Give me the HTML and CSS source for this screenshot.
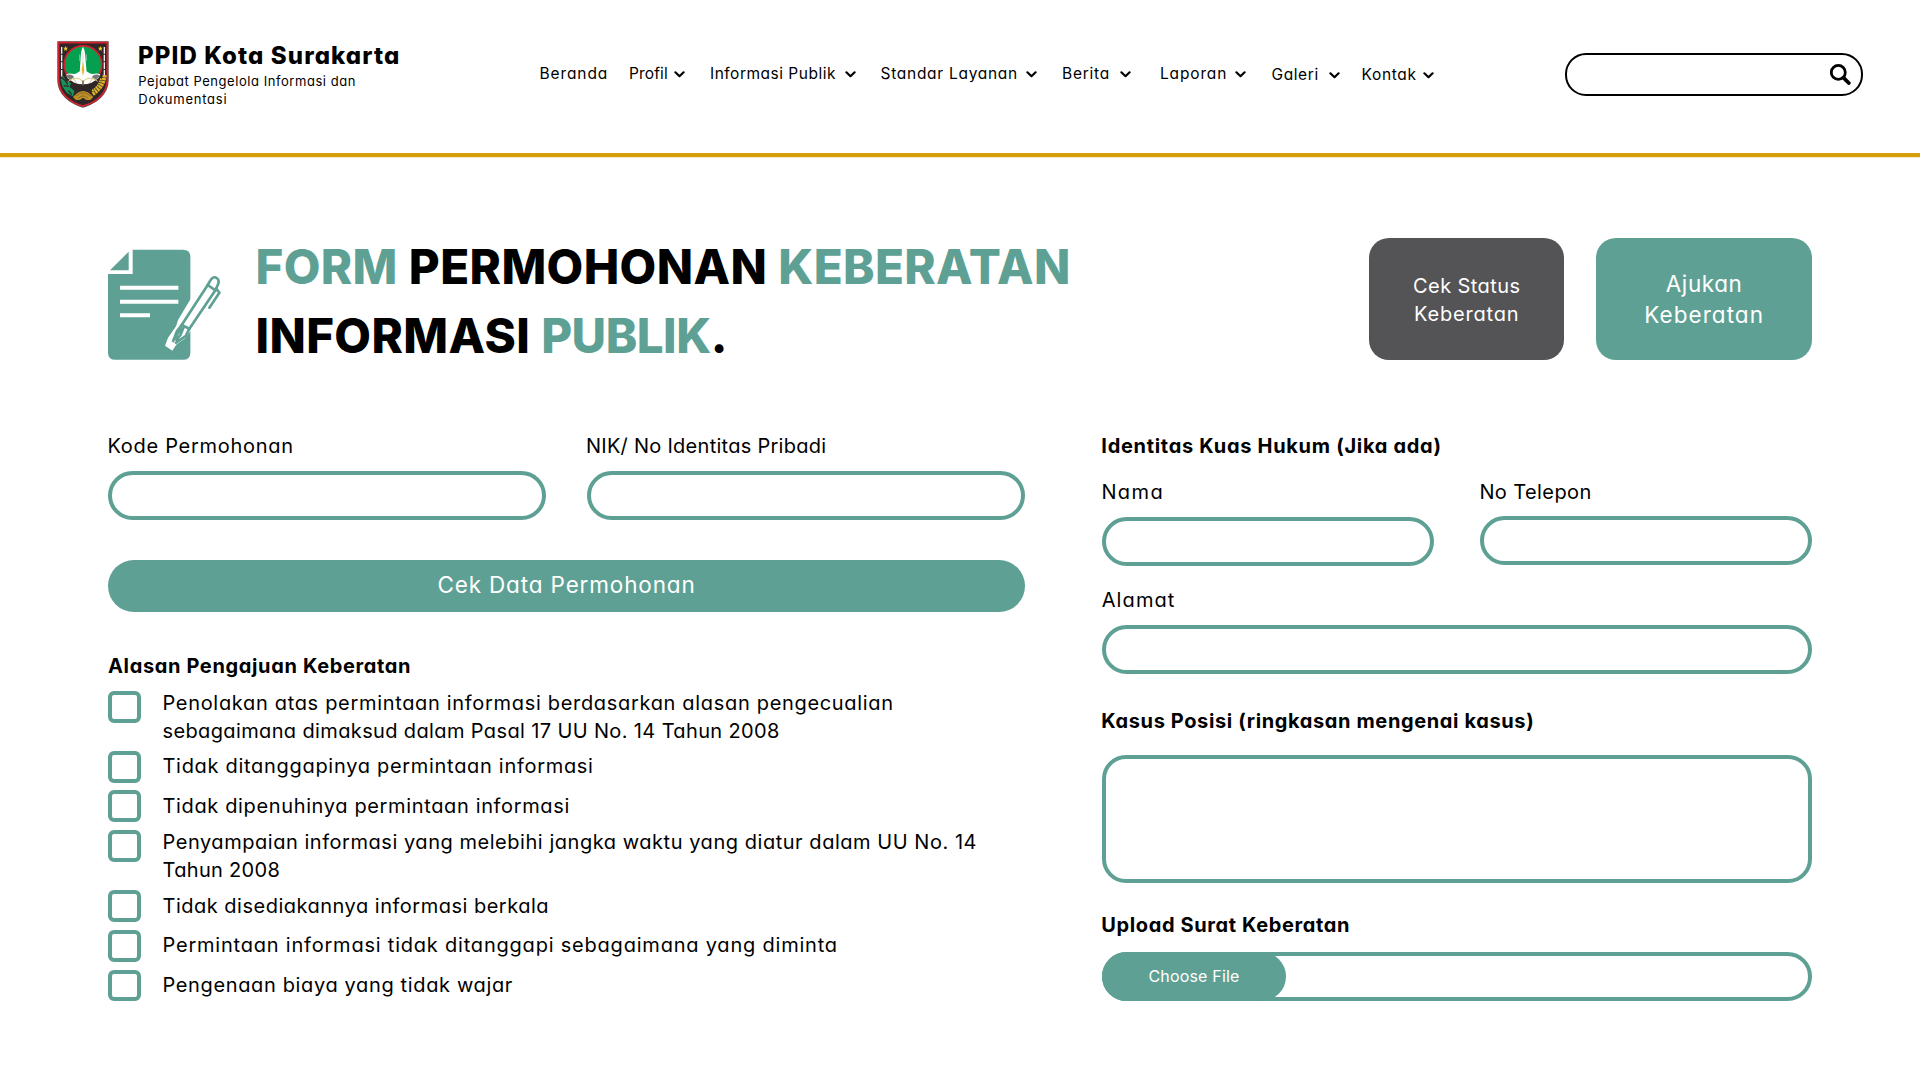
FILE: index.html
```html
<!DOCTYPE html>
<html lang="id">
<head>
<meta charset="utf-8">
<title>PPID Kota Surakarta</title>
<link rel="stylesheet" href="styles.css">
</head>
<body>
<svg width="0" height="0" class="defs"><defs><symbol id="chev" viewBox="0 0 11 7"><path d="M1.4 1.3 5.5 5.2 9.6 1.3" fill="none" stroke="#000" stroke-width="2.2" stroke-linecap="round" stroke-linejoin="round"/></symbol></defs></svg>
<header class="header">
  <div class="brand">
    <svg class="crest" viewBox="0 0 156 201">
      <path d="M1 1H155V118C155 160 118 190 78 200C38 190 1 160 1 118Z" fill="#5b4a4c"/>
      <path d="M5 5H151V117C151 158 114 186 78 195C42 186 5 158 5 117Z" fill="#2f2727" stroke="#d6212c" stroke-width="5"/>
      <path d="M14 18V112M142 18V112" stroke="#eee" stroke-width="4" stroke-dasharray="20 3"/>
      <path d="M11 116 18 104 28 120 42 126 38 138 52 150 48 166 30 156 17 138Z" fill="#16945a"/>
      <path d="M12 108l12 10M20 134l16 2M34 148l10 12M24 118l8 12" stroke="#2f2727" stroke-width="4"/>
      <path d="M143 102C141 124 132 142 106 160" fill="none" stroke="#dcb22a" stroke-width="12" stroke-dasharray="7 2"/>
      <path d="M132 112C128 128 120 140 104 150" fill="none" stroke="#e7c33b" stroke-width="5" stroke-dasharray="5 2"/>
      <circle cx="78" cy="71" r="59" fill="#d6212c"/>
      <circle cx="78" cy="71" r="54" fill="#05a04f"/>
      <path d="M28 100C42 94 50 103 60 96L70 90H87L97 96C108 103 116 94 130 100L124 112 104 125Q78 134 52 125L32 112Z" fill="#fff"/>
      <path d="M26 105q14-10 26 3l-12 8ZM130 105q-14-10-26 3l12 8Z" fill="#777"/>
      <path d="M68 96 72 35 75 24 78 17 81 24 84 35 89 96Z" fill="#fff"/>
      <path d="M78 32V96M68 40v20M88 40v20" stroke="#b9cfbd" stroke-width="2"/>
      <path d="M78 62l4 25-4 18-4-18Z" fill="#e2b52b"/>
      <path d="M34 121Q57 102 78 121Q99 102 122 121M78 119V134M50 113l8 13M106 113l-8 13" fill="none" stroke="#d8c878" stroke-width="3"/>
      <path d="M78 119V136" stroke="#222" stroke-width="3"/>
      <path d="M48 168Q78 132 109 168L100 177H88L78 170 68 177H57Z" fill="#bf9029"/>
      <path d="M56 165Q78 146 101 165M64 172Q78 157 93 172" fill="none" stroke="#725621" stroke-width="2"/>
      <path d="M26 15l2 5h5l-4 4 2 6-5-4-5 4 2-6-4-4h5ZM130 15l2 5h5l-4 4 2 6-5-4-5 4 2-6-4-4h5Z" fill="#f2d324"/>
    </svg>
    <div class="brand-text">
      <div class="brand-name">PPID Kota Surakarta</div>
      <div class="brand-sub">Pejabat Pengelola Informasi dan<br><span class="brand-sub-last">Dokumentasi</span></div>
    </div>
  </div>
  <nav class="nav">
    <a class="n-beranda">Beranda</a>
    <a class="n-profil">Profil<svg class="chev"><use href="#chev"/></svg></a>
    <a class="n-info">Informasi Publik<svg class="chev"><use href="#chev"/></svg></a>
    <a class="n-standar">Standar Layanan<svg class="chev"><use href="#chev"/></svg></a>
    <a class="n-berita">Berita<svg class="chev"><use href="#chev"/></svg></a>
    <a class="n-laporan">Laporan<svg class="chev"><use href="#chev"/></svg></a>
    <a class="n-galeri">Galeri<svg class="chev"><use href="#chev"/></svg></a>
    <a class="n-kontak">Kontak<svg class="chev"><use href="#chev"/></svg></a>
  </nav>
  <div class="search">
    <svg class="search-icon" viewBox="0 0 21 21"><circle cx="8.3" cy="8.4" r="7" fill="none" stroke="#000" stroke-width="2.8"/><path d="M13.6 13.9 18.8 19" stroke="#000" stroke-width="3.8" stroke-linecap="round"/></svg>
  </div>
</header>
<main class="main">
  <section class="hero">
    <svg class="form-icon" viewBox="0 0 340 334">
      <g fill="#5ea194">
        <path d="M74 2H225Q247 2 247 24V310Q247 332 225 332H22Q0 332 0 310V75H74Z"/>
        <path d="M6 64 62 8V64Z"/>
      </g>
      <path d="M36 116H211M36 158H211M36 199H126" stroke="#fff" stroke-width="12"/>
      <path d="M248 149 210 213 204 232 180 266 171 290 193 305 205 286 231 268 248 245 275 180Z" fill="#fff"/>
      <g fill="none" stroke="#5ea194" stroke-width="8" stroke-linejoin="round" stroke-linecap="round">
        <path d="M221 228 299 108 322 124 244 239Z" fill="#fff"/>
        <path d="M299 108 307 94Q316 80 326 87Q336 94 329 108L322 124"/>
        <path d="M324 119 334 131 304 176"/>
        <path d="M221 228 207 246 195 277M244 239 233 261 204 281M219 232 214 246 203 262M226 237 217 258 205 272"/>
      </g>
      <path d="M192 277 201 287 190 294 184 288Z" fill="#fff"/>
    </svg>
    <h1 class="title"><em>FORM</em> PERMOHONAN <em>KEBERATAN</em><br>INFORMASI <em class="tight">PUBLIK</em>.</h1>
    <button class="card-btn card-gray"><span class="cs">Cek Status</span><span class="kb">Keberatan</span></button>
    <button class="card-btn card-green"><span class="aj">Ajukan</span><span class="kb">Keberatan</span></button>
  </section>
  <div class="columns">
    <section class="left">
      <div class="pair">
        <div class="cell"><label class="label l-kode">Kode Permohonan</label><div class="field"></div></div>
        <div class="cell"><label class="label l-nik">NIK/ No Identitas Pribadi</label><div class="field"></div></div>
      </div>
      <button class="check-btn">Cek Data Permohonan</button>
      <h2 class="heading">Alasan Pengajuan Keberatan</h2>
      <ul class="reasons">
        <li class="two"><i class="box"></i><p><span class="r1a">Penolakan atas permintaan informasi berdasarkan alasan pengecualian</span><br><span class="r1b">sebagaimana dimaksud dalam Pasal 17 UU No. 14 Tahun 2008</span></p></li>
        <li><i class="box"></i><p class="r2">Tidak ditanggapinya permintaan informasi</p></li>
        <li><i class="box"></i><p class="r3">Tidak dipenuhinya permintaan informasi</p></li>
        <li class="two"><i class="box"></i><p><span class="r4a">Penyampaian informasi yang melebihi jangka waktu yang diatur dalam UU No. 14</span><br><span class="r4b">Tahun 2008</span></p></li>
        <li><i class="box"></i><p class="r5">Tidak disediakannya informasi berkala</p></li>
        <li><i class="box"></i><p class="r6">Permintaan informasi tidak ditanggapi sebagaimana yang diminta</p></li>
        <li><i class="box"></i><p class="r7">Pengenaan biaya yang tidak wajar</p></li>
      </ul>
    </section>
    <section class="right">
      <h2 class="heading h-id">Identitas Kuas Hukum (Jika ada)</h2>
      <div class="pair pair-id">
        <div class="cell cell-nama"><label class="label l-nama">Nama</label><div class="field"></div></div>
        <div class="cell cell-telp"><label class="label l-telp">No Telepon</label><div class="field"></div></div>
      </div>
      <div class="cell cell-alamat"><label class="label l-alamat">Alamat</label><div class="field"></div></div>
      <h2 class="heading h-kasus">Kasus Posisi (ringkasan mengenai kasus)</h2>
      <div class="field area"></div>
      <h2 class="heading h-upload">Upload Surat Keberatan</h2>
      <div class="field upload"><button class="choose">Choose File</button></div>
    </section>
  </div>
</main>
</body>
</html>
```
FILE: styles.css
```css
* { box-sizing: border-box; margin: 0; padding: 0; }
body {
  background: #fff;
  color: #000;
  font-family: Inter, "Open Sans", sans-serif;
  font-feature-settings: "cv11";
  width: 1920px;
  height: 1080px;
  overflow: hidden;
}
button { border: 0; font: inherit; font-feature-settings: inherit; color: #fff; }
.defs { display: block; width: 0; height: 0; }

/* Header */
.header {
  display: flex;
  height: 157px;
  border-bottom: 4px solid #d69e0a;
  box-shadow: 0 1px 0 #f7eacb;
}
.brand { display: flex; width: 539.5px; padding-left: 57px; flex: none; }
.crest { width: 52px; height: 67px; margin-top: 40.5px; }
.brand-text { margin: 39px 0 0 29px; }
.brand-name { font-size: 24px; font-weight: 800; line-height: 34px; letter-spacing: 1.1px; white-space: nowrap; }
.brand-sub { font-size: 13px; line-height: 18px; letter-spacing: .55px; margin: -1px 0 0 .3px; }
.brand-sub-last { letter-spacing: .75px; }
.nav {
  display: grid;
  grid-template-columns: 89.5px 81px 170.5px 181.5px 98px 111.5px 90px 72px;
  width: 1025.5px;
  flex: none;
  padding-top: 63px;
  align-content: start;
  font-size: 15.5px;
  line-height: 22px;
}
.nav a { display: flex; justify-content: space-between; align-items: center; white-space: nowrap; padding-right: 25px; }
.chev { width: 11px; height: 7px; margin-top: 1px; }
.nav .n-beranda { letter-spacing: .9px; padding: 0; }
.nav .n-profil { letter-spacing: .15px; }
.nav .n-info { letter-spacing: .5px; }
.nav .n-standar { letter-spacing: .72px; }
.nav .n-berita { letter-spacing: .75px; padding-right: 29px; }
.nav .n-laporan { letter-spacing: .85px; padding-right: 26px; }
.nav .n-galeri { letter-spacing: .6px; padding-right: 22px; margin-top: 1px; margin-bottom: -1px; }
.nav .n-kontak { letter-spacing: .65px; padding-right: 0; margin-top: 1px; margin-bottom: -1px; }
.search {
  display: flex;
  justify-content: flex-end;
  align-items: center;
  width: 297.5px;
  height: 43px;
  margin-top: 53px;
  padding-right: 10px;
  border: 2px solid #000;
  border-radius: 21px;
}
.search-icon { width: 21px; height: 21px; }

/* Title row */
.main { padding: 81px 108px 0; }
.hero { display: flex; align-items: flex-start; height: 122px; }
.form-icon { width: 113.4px; height: 111.4px; margin-top: 11px; flex: none; }
.title {
  margin: -6px 0 0 34.1px;
  width: 1113.5px;
  flex: none;
  font-size: 47.5px;
  font-weight: 800;
  line-height: 69px;
  letter-spacing: .38px;
  word-spacing: .3px;
  white-space: nowrap;
}
.title em { font-style: normal; color: #5ea194; }
.title .tight { letter-spacing: -.5px; }
.card-btn {
  display: flex;
  flex-direction: column;
  align-items: center;
  justify-content: center;
  flex: none;
  height: 122px;
  border-radius: 20px;
}
.card-gray { width: 195.5px; padding-top: 2px; background: #545456; font-size: 20px; line-height: 28px; }
.card-gray .cs { letter-spacing: .4px; }
.card-gray .kb { letter-spacing: .8px; }
.card-green { width: 216.5px; margin-left: 31.4px; background: #5ea194; font-size: 22.5px; line-height: 31px; }
.card-green .aj { letter-spacing: .6px; }
.card-green .kb { letter-spacing: 1.05px; }

/* Form */
.columns { display: grid; grid-template-columns: 917px 710px; column-gap: 77px; margin-top: 72px; font-size: 20px; line-height: 28px; }
.pair { display: grid; grid-template-columns: 438px 438.5px; justify-content: space-between; }
.cell { display: flex; flex-direction: column; gap: 11px; }
.label { margin-left: -.6px; white-space: nowrap; }
.l-kode { letter-spacing: .72px; }
.l-nik { letter-spacing: .27px; }
.l-nama { letter-spacing: 1.4px; }
.l-telp { letter-spacing: .4px; }
.l-alamat { letter-spacing: 1.1px; margin-left: -.3px; }
.field { height: 49px; border: 4px solid #5ea194; border-radius: 24.5px; }
.check-btn {
  display: block;
  width: 917px;
  height: 51.5px;
  margin-top: 40px;
  padding-bottom: 1px;
  border-radius: 26px;
  background: #5ea194;
  font-size: 22.5px;
  letter-spacing: .85px;
}
.heading { font-size: 20px; line-height: 28px; font-weight: 700; letter-spacing: .64px; white-space: nowrap; }
.left .heading { margin-top: 40.5px; }
.reasons {
  display: grid;
  grid-template-rows: 60px 39px 40px 60px 40px 39.5px 32px;
  margin-top: 11px;
  list-style: none;
}
.reasons li { display: flex; gap: 22px; white-space: nowrap; }
.reasons p { margin-top: 1px; }
.reasons .two p { margin-top: -2px; }
.box { width: 32.5px; height: 31.5px; flex: none; border: 4px solid #5ea194; border-radius: 6px; }
.r1a { letter-spacing: .68px; }
.r1b { letter-spacing: .37px; }
.r2 { letter-spacing: .7px; }
.reasons .r3 { letter-spacing: .64px; margin-top: 2px; }
.r4a { letter-spacing: .54px; }
.r4b { letter-spacing: .32px; }
.reasons .r5 { letter-spacing: .5px; margin-top: 2px; }
.r6 { letter-spacing: .79px; }
.r7 { letter-spacing: .64px; }
.right .heading { margin-left: -.7px; }
.right .h-id { letter-spacing: .7px; }
.pair-id { grid-template-columns: 331.5px 332px; margin-top: 18px; }
.cell-telp { gap: 10px; }
.cell-alamat { margin-top: 20px; }
.right .h-kasus { margin-top: 33px; letter-spacing: .62px; }
.area { height: 128px; margin-top: 20px; border-radius: 24px; }
.right .h-upload { margin-top: 28px; letter-spacing: .61px; }
.upload { margin-top: 13px; }
.choose {
  display: block;
  width: 184px;
  height: 49px;
  margin: -4px 0 0 -4px;
  padding-bottom: 1px;
  border-radius: 24.5px;
  background: #5ea194;
  font-size: 16px;
  letter-spacing: .17px;
}
```
